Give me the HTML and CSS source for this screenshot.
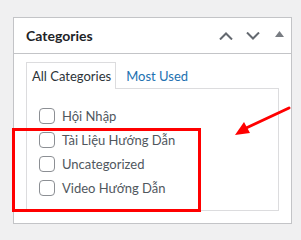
FILE: index.html
```html
<!DOCTYPE html>
<html lang="vi">
<head>
    <meta charset="UTF-8">
    <title>Categories</title>
    <link rel="stylesheet" href="styles.css">
</head>
<body>

    <div class="postbox">
        <div class="postbox-header">
            <h2>Categories</h2>
            <div class="handle-actions">
                <svg class="icon" width="14" height="8" viewBox="0 0 14 8"><path d="M1 7.5 L7 1.5 L13 7.5" fill="none" stroke="#646970" stroke-width="2"/></svg>
                <svg class="icon" width="14" height="8" viewBox="0 0 14 8"><path d="M1 0.5 L7 6.5 L13 0.5" fill="none" stroke="#646970" stroke-width="2"/></svg>
                <svg class="icon toggle" width="9" height="6" viewBox="0 0 9 6"><path d="M0 6 L4.5 0 L9 6 Z" fill="#787c82"/></svg>
            </div>
        </div>
        <div class="inside">
            <ul class="category-tabs">
                <li class="tabs">All Categories</li>
                <li><a href="#">Most Used</a></li>
            </ul>
            <div class="tabs-panel">
                <ul class="categorychecklist">
                    <li><label><span class="check"></span>Hội Nhập</label></li>
                    <li><label><span class="check"></span>Tài Liệu Hướng Dẫn</label></li>
                    <li><label><span class="check"></span>Uncategorized</label></li>
                    <li><label><span class="check"></span>Video Hướng Dẫn</label></li>
                </ul>
            </div>
        </div>
    </div>

    <!-- annotation over the screenshot -->
    <div class="highlight"></div>
    <svg class="arrow" width="60" height="32" viewBox="0 0 60 32">
        <line x1="57" y1="3" x2="12" y2="24" stroke="#f00" stroke-width="3" stroke-linecap="round"/>
        <path d="M3 30 L12 17 L18 28 Z" fill="#f00"/>
    </svg>

</body>
</html>
```

FILE: styles.css
```css
body {
    font-family: Lato, "Open Sans", sans-serif;
    background-color: #f0f0f1;
    margin: 0;
    padding: 17px 0 0 13px;
    position: relative;
    height: 240px;
    box-sizing: border-box;
}
.postbox {
    width: 279px;
    height: 207px;
    box-sizing: border-box;
    background-color: white;
    border: 1px solid #c3c4c7;
}
.postbox-header {
    display: flex;
    align-items: center;
    justify-content: space-between;
    height: 35px;
    border-bottom: 1px solid #c3c4c7;
    padding: 0 7px 0 12px;
}
.postbox-header h2 {
    margin: 0;
    font-size: 14px;
    font-weight: 700;
    color: #1d2327;
}
.handle-actions {
    display: flex;
    align-items: center;
    gap: 13px;
}
.toggle {
    margin-left: 2px;
    margin-top: -3px;
}
.inside {
    padding: 8px 12px 0 12px;
}
.category-tabs {
    list-style: none;
    margin: 0;
    padding: 0;
    display: flex;
    font-size: 13px;
    line-height: 26px;
}
.category-tabs li {
    padding: 0 4px 0 5px;
    border: 1px solid transparent;
    border-bottom: none;
    margin-bottom: -1px;
    position: relative;
}
.category-tabs .tabs {
    border-color: #dcdcde;
    background-color: white;
    color: #2c3338;
    margin-right: 4px;
}
.category-tabs a {
    color: #2271b1;
    text-decoration: none;
}
.tabs-panel {
    height: 123px;
    box-sizing: border-box;
    border: 1px solid #dcdcde;
    padding: 15px 12px 0 12px;
}
.categorychecklist {
    list-style: none;
    margin: 0;
    padding: 0;
    font-size: 13px;
    color: #50575e;
}
.categorychecklist li {
    height: 24px;
    display: flex;
    align-items: center;
}
.categorychecklist label {
    display: flex;
    align-items: center;
}
.check {
    width: 16px;
    height: 16px;
    box-sizing: border-box;
    border: 1px solid #8c8f94;
    border-radius: 4px;
    margin-right: 7px;
}
.highlight {
    position: absolute;
    left: 12px;
    top: 128px;
    width: 189px;
    height: 84px;
    box-sizing: border-box;
    border: 3px solid #f00;
}
.arrow {
    position: absolute;
    left: 232px;
    top: 105px;
}
```
